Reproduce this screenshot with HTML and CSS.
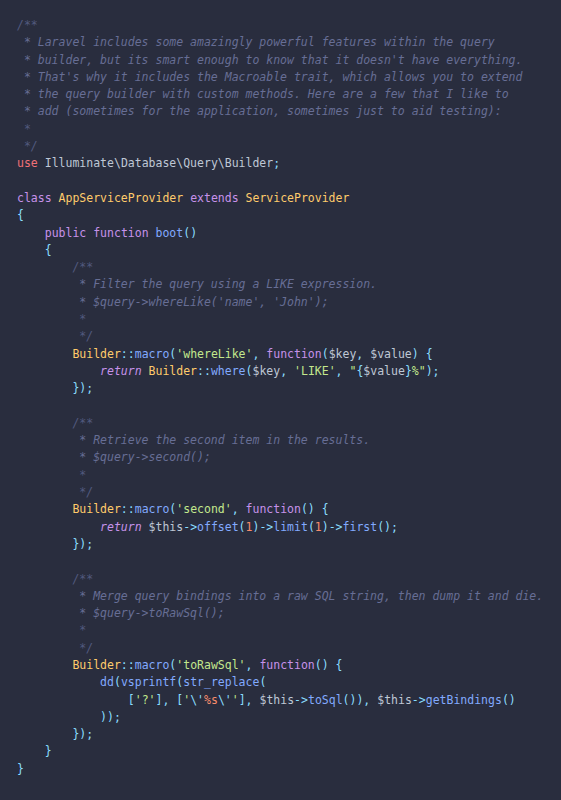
FILE: index.html
```html
<!DOCTYPE html>
<html>
<head>
<meta charset="utf-8">
<link rel="stylesheet" href="styles.css">
</head>
<body>
<pre class="code"><span class="cd">/**</span>
<span class="c"> * Laravel includes some amazingly powerful features within the query</span>
<span class="c"> * builder, but its smart enough to know that it doesn't have everything.</span>
<span class="c"> * That's why it includes the Macroable trait, which allows you to extend</span>
<span class="c"> * the query builder with custom methods. Here are a few that I like to</span>
<span class="c"> * add (sometimes for the application, sometimes just to aid testing):</span>
<span class="cd"> *</span>
<span class="cd"> */</span>
<span class="kr">use</span> <span class="v">Illuminate\Database\Query\Builder</span><span class="p">;</span>

<span class="k">class</span> <span class="t">AppServiceProvider</span> <span class="k">extends</span> <span class="t">ServiceProvider</span>
<span class="p">{</span>
    <span class="k">public</span> <span class="k">function</span> <span class="f">boot</span><span class="p">()</span>
    <span class="p">{</span>
        <span class="cd">/**</span>
<span class="c">         * Filter the query using a LIKE expression.</span>
<span class="c">         * $query-&gt;whereLike('name', 'John');</span>
<span class="cd">         *</span>
<span class="cd">         */</span>
        <span class="t">Builder</span><span class="p">::</span><span class="f">macro</span><span class="p">(</span><span class="s">'whereLike'</span><span class="p">,</span> <span class="k">function</span><span class="p">(</span><span class="v">$key</span><span class="p">,</span> <span class="v">$value</span><span class="p">)</span> <span class="p">{</span>
            <span class="k i">return</span> <span class="t">Builder</span><span class="p">::</span><span class="f">where</span><span class="p">(</span><span class="v">$key</span><span class="p">,</span> <span class="s">'LIKE'</span><span class="p">,</span> <span class="s">"</span><span class="p">{</span><span class="v">$value</span><span class="p">}</span><span class="s">%"</span><span class="p">);</span>
        <span class="p">});</span>

        <span class="cd">/**</span>
<span class="c">         * Retrieve the second item in the results.</span>
<span class="c">         * $query-&gt;second();</span>
<span class="cd">         *</span>
<span class="cd">         */</span>
        <span class="t">Builder</span><span class="p">::</span><span class="f">macro</span><span class="p">(</span><span class="s">'second'</span><span class="p">,</span> <span class="k">function</span><span class="p">()</span> <span class="p">{</span>
            <span class="k i">return</span> <span class="v">$this</span><span class="p">-&gt;</span><span class="f">offset</span><span class="p">(</span><span class="n">1</span><span class="p">)-&gt;</span><span class="f">limit</span><span class="p">(</span><span class="n">1</span><span class="p">)-&gt;</span><span class="f">first</span><span class="p">();</span>
        <span class="p">});</span>

        <span class="cd">/**</span>
<span class="c">         * Merge query bindings into a raw SQL string, then dump it and die.</span>
<span class="c">         * $query-&gt;toRawSql();</span>
<span class="cd">         *</span>
<span class="cd">         */</span>
        <span class="t">Builder</span><span class="p">::</span><span class="f">macro</span><span class="p">(</span><span class="s">'toRawSql'</span><span class="p">,</span> <span class="k">function</span><span class="p">()</span> <span class="p">{</span>
            <span class="f">dd</span><span class="p">(</span><span class="f">vsprintf</span><span class="p">(</span><span class="f">str_replace</span><span class="p">(</span>
                <span class="p">[</span><span class="s">'?'</span><span class="p">],</span> <span class="p">[</span><span class="s">'</span><span class="e">\'</span><span class="n">%s</span><span class="e">\'</span><span class="s">'</span><span class="p">],</span> <span class="v">$this</span><span class="p">-&gt;</span><span class="f">toSql</span><span class="p">()),</span> <span class="v">$this</span><span class="p">-&gt;</span><span class="f">getBindings</span><span class="p">()</span>
            <span class="p">));</span>
        <span class="p">});</span>
    <span class="p">}</span>
<span class="p">}</span></pre>
</body>
</html>
```

FILE: styles.css
```css
html, body {
  margin: 0;
  padding: 0;
  background: #292d3e;
  height: 100%;
}

.code {
  margin: 0;
  padding: 17px 17px 16px;
  font-family: "DejaVu Sans Mono", "Liberation Mono", monospace;
  font-size: 11.5px;
  line-height: 17.3px;
  color: #bfc7d5;
  white-space: pre;
}

.c {
  color: #676e95;
  font-style: italic;
}

.cd {
  color: #525a7e;
  font-style: italic;
}

.k {
  color: #c792ea;
}

.kr {
  color: #f07178;
}

.t {
  color: #ffcb6b;
}

.f {
  color: #82aaff;
}

.p {
  color: #89ddff;
}

.s {
  color: #c3e88d;
}

.n {
  color: #f78c6c;
}

.e {
  color: #89ddff;
}

.v {
  color: #bfc7d5;
}

.i {
  font-style: italic;
}
```
